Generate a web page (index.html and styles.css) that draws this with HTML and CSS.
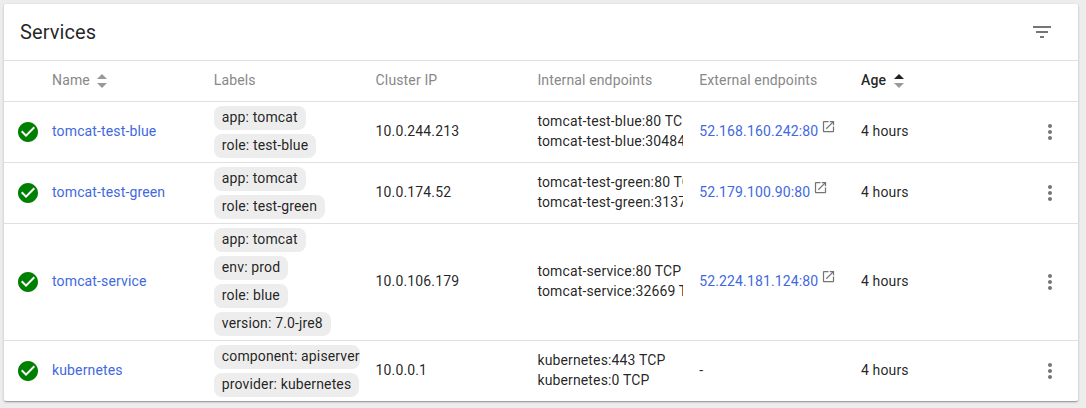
FILE: index.html
```html
<!DOCTYPE html>
<html lang="en">
<head>
<meta charset="utf-8">
<title>Services</title>
<link rel="stylesheet" href="styles.css">
</head>
<body>
<svg width="0" height="0" class="sprite">
  <symbol id="check" viewBox="0 0 24 24"><path d="M12 2C6.48 2 2 6.48 2 12s4.480 10 10 10 10-4.480 10-10S17.520 2 12 2zm-2 15l-5-5 1.410-1.410L10 14.170l7.590-7.590L19 8l-9 9z"/></symbol>
  <symbol id="open" viewBox="0 0 24 24"><path d="M19 19H5V5h7V3H5c-1.110 0-2 .9-2 2v14c0 1.100.89 2 2 2h14c1.100 0 2-.9 2-2v-7h-2v7zM14 3v2h3.590l-9.830 9.830 1.410 1.410L19 6.410V10h2V3h-7z"/></symbol>
  <symbol id="more" viewBox="0 0 24 24"><path d="M12 8c1.100 0 2-.9 2-2s-.9-2-2-2-2 .9-2 2 .9 2 2 2zm0 2c-1.100 0-2 .9-2 2s.9 2 2 2 2-.9 2-2-.9-2-2-2zm0 6c-1.100 0-2 .9-2 2s.9 2 2 2 2-.9 2-2-.9-2-2-2z"/></symbol>
  <symbol id="filter" viewBox="0 0 24 24"><path d="M10 18h4v-2h-4v2zM3 6v2h18V6H3zm3 7h12v-2H6v2z"/></symbol>
</svg>
<main class="card">
  <header class="title-bar">
    <h1 class="title">Services</h1>
    <svg class="filter"><use href="#filter"/></svg>
  </header>
  <div class="row head">
    <span></span>
    <span class="cell">Name<svg class="sort" viewBox="0 0 10 14"><path d="M0 5L5 0l5 5z"/><path d="M0 9h10l-5 5z"/></svg></span>
    <span class="cell">Labels</span>
    <span class="cell">Cluster IP</span>
    <span class="cell">Internal endpoints</span>
    <span class="cell">External endpoints</span>
    <span class="cell sorted">Age<svg class="sort" viewBox="0 0 10 14"><path class="active" d="M0 5L5 0l5 5z"/><path d="M0 9h10l-5 5z"/></svg></span>
  </div>
  <div class="row">
    <svg class="status"><use href="#check"/></svg>
    <div class="cell"><a class="link">tomcat-test-blue</a></div>
    <div class="cell labels"><span class="chip">app: tomcat</span><span class="chip">role: test-blue</span></div>
    <div class="cell">10.0.244.213</div>
    <div class="cell"><div>tomcat-test-blue:80 TCP</div><div>tomcat-test-blue:30484 TCP</div></div>
    <div class="cell"><a class="link">52.168.160.242:80</a><svg class="open"><use href="#open"/></svg></div>
    <div class="cell">4 hours</div>
    <svg class="more"><use href="#more"/></svg>
  </div>
  <div class="row">
    <svg class="status"><use href="#check"/></svg>
    <div class="cell"><a class="link">tomcat-test-green</a></div>
    <div class="cell labels"><span class="chip">app: tomcat</span><span class="chip">role: test-green</span></div>
    <div class="cell">10.0.174.52</div>
    <div class="cell"><div>tomcat-test-green:80 TCP</div><div>tomcat-test-green:3137</div></div>
    <div class="cell"><a class="link">52.179.100.90:80</a><svg class="open"><use href="#open"/></svg></div>
    <div class="cell">4 hours</div>
    <svg class="more"><use href="#more"/></svg>
  </div>
  <div class="row">
    <svg class="status"><use href="#check"/></svg>
    <div class="cell"><a class="link">tomcat-service</a></div>
    <div class="cell labels"><span class="chip">app: tomcat</span><span class="chip">env: prod</span><span class="chip">role: blue</span><span class="chip">version: 7.0-jre8</span></div>
    <div class="cell">10.0.106.179</div>
    <div class="cell"><div>tomcat-service:80 TCP</div><div>tomcat-service:32669 TCP</div></div>
    <div class="cell"><a class="link">52.224.181.124:80</a><svg class="open"><use href="#open"/></svg></div>
    <div class="cell">4 hours</div>
    <svg class="more"><use href="#more"/></svg>
  </div>
  <div class="row">
    <svg class="status"><use href="#check"/></svg>
    <div class="cell"><a class="link">kubernetes</a></div>
    <div class="cell labels"><span class="chip">component: apiserver</span><span class="chip">provider: kubernetes</span></div>
    <div class="cell">10.0.0.1</div>
    <div class="cell"><div>kubernetes:443 TCP</div><div>kubernetes:0 TCP</div></div>
    <div class="cell">-</div>
    <div class="cell">4 hours</div>
    <svg class="more"><use href="#more"/></svg>
  </div>
</main>
</body>
</html>
```
FILE: styles.css
```css
* { box-sizing: border-box; }
body {
  margin: 0;
  padding: 4px 8px 7px 4px;
  background: #ededed;
  color: rgba(0, 0, 0, 0.87);
  font: 14px/20px Roboto, sans-serif;
  letter-spacing: 0.14px;
}
.sprite { display: block; }
.card {
  height: 397px;
  background: #fff;
  border-radius: 2px;
  box-shadow: 0 1px 3px 0 rgba(0,0,0,.2), 0 1px 1px 0 rgba(0,0,0,.14), 0 2px 1px -1px rgba(0,0,0,.12);
}
.title-bar {
  display: flex;
  align-items: center;
  justify-content: space-between;
  height: 56px;
  padding: 0 24px 0 16px;
}
.title { margin: 0; font-size: 20px; font-weight: 400; letter-spacing: 0.1px; }
.filter { width: 24px; height: 24px; fill: #757575; }
.row {
  display: grid;
  grid-template-columns: 48px repeat(6, 161.8px) 1fr;
  align-items: center;
  min-height: 61px;
  border-top: 1px solid #e0e0e0;
}
.head { min-height: 41px; color: #888; }
.cell { margin-right: 16px; padding-bottom: 2px; overflow: hidden; white-space: nowrap; }
.head .cell { display: flex; align-items: center; }
.head .sorted { color: rgba(0, 0, 0, 0.87); font-weight: 500; }
.sort { width: 10px; height: 14px; margin: 2px 0 0 7.5px; fill: #999; }
.sort .active { fill: #212121; }
.status { width: 24px; height: 24px; margin-left: 12px; fill: #008000; }
.link { color: #3f69e0; }
.labels { display: flex; flex-direction: column; align-items: flex-start; gap: 4px; padding-top: 4px; padding-bottom: 4px; }
.chip {
  max-width: 100%;
  height: 24px;
  padding: 0 8px;
  border-radius: 8px;
  background: #ededed;
  line-height: 22px;
}
.open { width: 15px; height: 15px; margin: -4px 0 0 3px; vertical-align: 2px; fill: #757575; }
.more { width: 24px; height: 24px; margin-left: 15px; fill: #757575; }
```
